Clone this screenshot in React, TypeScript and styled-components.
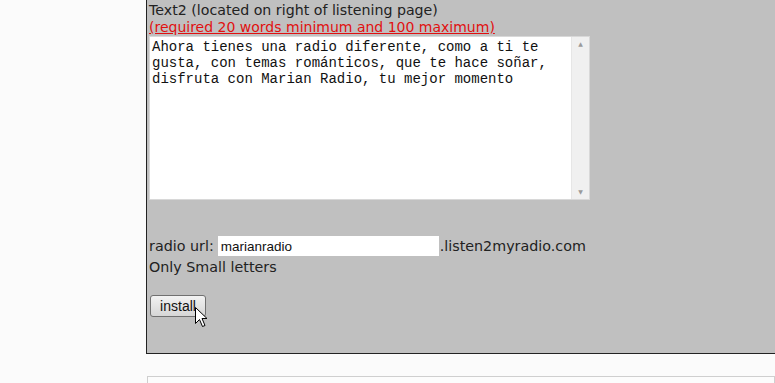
import React, { useState } from "react";
import styled, { createGlobalStyle } from "styled-components";

const GlobalStyle = createGlobalStyle`
  html, body {
    margin: 0;
    padding: 0;
    background: #fbfbfb;
    overflow: hidden;
  }
`;

const Page = styled.div`
  display: flex;
  flex-direction: column;
  padding-left: 146px;
  font-family: "DejaVu Sans", Tahoma, sans-serif;
`;

const Panel = styled.div`
  position: relative;
  background: #c0c0c0;
  border-left: 1px solid #222;
  border-bottom: 1px solid #222;
  height: 354px;
  padding: 1px 0 0 2px;
  box-sizing: border-box;
  color: #222;
`;

const Label = styled.div`
  font-size: 14.2px;
  line-height: 18px;
`;

const Warning = styled.div`
  font-size: 14px;
  line-height: 17px;
  color: #e01010;
  text-decoration: underline;
`;

const TextBox = styled.div`
  display: flex;
  width: 441px;
  height: 164px;
  background: #fff;
  border: 1px solid #d8d8d8;
  box-sizing: border-box;
`;

const Area = styled.textarea`
  flex: 1;
  border: none;
  outline: none;
  resize: none;
  overflow: hidden;
  padding: 2px 2px;
  font-family: "Liberation Mono", "Courier New", monospace;
  font-size: 14px;
  line-height: 16px;
  color: #111;
  background: transparent;
`;

const ScrollBar = styled.div`
  width: 17px;
  background: #f0f0f0;
  border-left: 1px solid #e6e6e6;
  display: flex;
  flex-direction: column;
  justify-content: space-between;
  align-items: center;
  padding: 3px 0;
  color: #9a9a9a;
  font-size: 6px;
  line-height: 8px;
`;

const UrlRow = styled.div`
  display: flex;
  align-items: center;
  margin-top: 36px;
  font-size: 14.3px;
  line-height: 20px;
`;

const UrlInput = styled.input`
  width: 221px;
  height: 20px;
  box-sizing: border-box;
  margin: 0 1px 0 4px;
  padding: 1px 3px;
  border: none;
  background: #fff;
  font-family: "Liberation Sans", Arial, sans-serif;
  font-size: 13.5px;
  color: #111;
  outline: none;
`;

const Hint = styled.div`
  font-size: 14.3px;
  line-height: 23px;
`;

const InstallButton = styled.button`
  margin: 16px 0 0 1px;
  width: 56px;
  height: 22px;
  padding: 0;
  border: 1px solid #707070;
  border-radius: 3px;
  background: linear-gradient(#f2f2f2, #e4e4e4 50%, #d6d6d6);
  font-family: "Liberation Sans", Arial, sans-serif;
  font-size: 14px;
  color: #111;
`;

const Cursor = styled.svg`
  position: absolute;
  left: 48px;
  top: 307px;
`;

const NextBox = styled.div`
  margin-top: 22px;
  margin-left: 1px;
  height: 20px;
  border: 1px solid #cfcfcf;
  border-bottom: none;
  background: #fcfcfc;
`;

export default function App() {
  const [text, setText] = useState(
    "Ahora tienes una radio diferente, como a ti te gusta, con temas románticos, que te hace soñar, disfruta con Marian Radio, tu mejor momento"
  );
  const [url, setUrl] = useState("marianradio");

  return (
    <>
      <GlobalStyle />
      <Page>
        <Panel>
          <Label>Text2 (located on right of listening page)</Label>
          <Warning>(required 20 words minimum and 100 maximum)</Warning>
          <TextBox>
            <Area value={text} onChange={(e) => setText(e.target.value)} />
            <ScrollBar>
              <span>▲</span>
              <span>▼</span>
            </ScrollBar>
          </TextBox>
          <UrlRow>
            radio url:
            <UrlInput value={url} onChange={(e) => setUrl(e.target.value)} />
            .listen2myradio.com
          </UrlRow>
          <Hint>Only Small letters</Hint>
          <InstallButton type="button">install</InstallButton>
          <Cursor width="13" height="21" viewBox="0 0 13 21">
            <path
              d="M0.5 0.5 L0.5 16.5 L4.5 12.5 L7.5 19.5 L10 18.5 L7 11.5 L12 11.5 Z"
              fill="#fff"
              stroke="#000"
              strokeWidth="1"
            />
          </Cursor>
        </Panel>
        <NextBox />
      </Page>
    </>
  );
}
